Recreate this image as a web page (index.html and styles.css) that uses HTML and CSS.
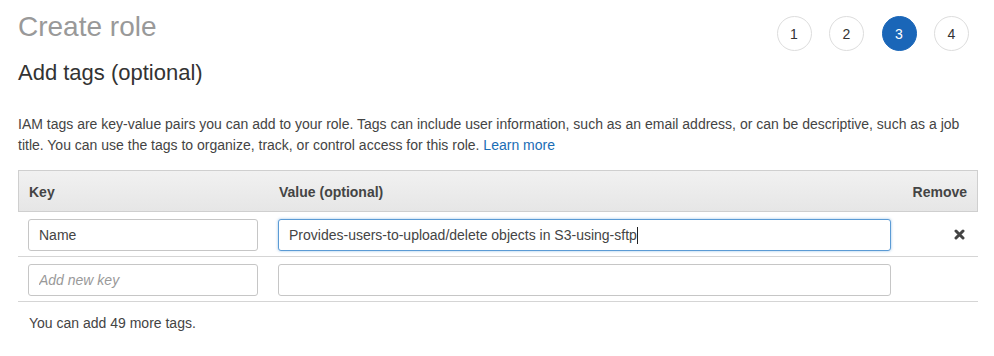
FILE: index.html
```html
<!DOCTYPE html>
<html lang="en">
<head>
<meta charset="utf-8">
<title>Create role</title>
<link rel="stylesheet" href="styles.css">
</head>
<body>
<div class="page">
  <div class="top">
    <div class="titles">
      <h1 class="title">Create role</h1>
      <h2 class="subtitle">Add tags (optional)</h2>
    </div>
    <ol class="steps">
      <li class="step">1</li>
      <li class="step">2</li>
      <li class="step active">3</li>
      <li class="step">4</li>
    </ol>
  </div>
  <p class="intro">IAM tags are key-value pairs you can add to your role. Tags can include user information, such as an email address, or can be descriptive, such as a job title. You can use the tags to organize, track, or control access for this role. <a class="link" href="#">Learn more</a></p>
  <div class="tags">
    <div class="row head">
      <div class="cell">Key</div>
      <div class="cell">Value (optional)</div>
      <div class="cell right">Remove</div>
    </div>
    <div class="row">
      <div class="cell"><input class="field" type="text" value="Name"></div>
      <div class="cell"><div class="field focused">Provides-users-to-upload/delete objects in S3-using-sftp<span class="caret"></span></div></div>
      <div class="cell right">
        <svg class="remove" width="11" height="11" viewBox="0 0 11 11"><path d="M2 2 L9 9 M9 2 L2 9" stroke="#444" stroke-width="3" stroke-linecap="round"/></svg>
      </div>
    </div>
    <div class="row">
      <div class="cell"><input class="field" type="text" placeholder="Add new key"></div>
      <div class="cell"><input class="field" type="text"></div>
      <div class="cell right"></div>
    </div>
  </div>
  <p class="note">You can add 49 more tags.</p>
</div>
</body>
</html>
```
FILE: styles.css
```css
* { box-sizing: border-box; }
html, body { margin: 0; padding: 0; background: #fff; }
body {
  font-family: "Liberation Sans", Arial, sans-serif;
  font-size: 14px;
  color: #444;
}
.page { padding: 10px 16px 0 18px; }
.top { display: flex; justify-content: space-between; align-items: flex-start; }
.title {
  margin: 0;
  font-size: 28px;
  line-height: 34px;
  font-weight: normal;
  color: #999;
}
.subtitle {
  margin: 15px 0 0 0;
  font-size: 22px;
  line-height: 28px;
  font-weight: normal;
  color: #333;
}
.steps {
  list-style: none;
  margin: 6px 9px 0 0;
  padding: 0;
  display: flex;
  gap: 17.5px;
}
.step {
  width: 35px;
  height: 35px;
  border: 1px solid #ddd;
  border-radius: 50%;
  display: flex;
  align-items: center;
  justify-content: center;
  font-size: 14px;
  color: #333;
  background: #fff;
}
.step.active { background: #1a66b8; border-color: #1a66b8; color: #fff; }
.intro {
  margin: 27px 0 0 0;
  line-height: 21px;
  color: #444;
}
.link { color: #1a6db5; text-decoration: none; }
.tags { margin-top: 14px; width: 960px; }
.row {
  display: grid;
  grid-template-columns: 250px 633px 1fr;
  align-items: center;
  height: 45px;
  border-bottom: 1px solid #d5d5d5;
}
.row.head {
  height: 42px;
  border: 1px solid #cfcfcf;
  background: linear-gradient(#f1f1f1, #e6e6e6);
  font-weight: bold;
  color: #444;
}
.cell { padding: 0 10px; }
.row.head .cell { padding-top: 1px; }
.cell.right { display: flex; justify-content: flex-end; padding-right: 10px; }
.field {
  display: block;
  width: 100%;
  height: 32px;
  margin-top: 1px;
  border: 1px solid #c6c6c6;
  border-radius: 3px;
  padding: 0 10px;
  font-family: "Liberation Sans", Arial, sans-serif;
  font-size: 14px;
  color: #444;
  background: #fff;
  outline: none;
  line-height: 30px;
}
.field::placeholder { color: #999; font-style: italic; }
.field.focused {
  border-color: #5b9bd5;
  box-shadow: 0 0 3px rgba(91, 155, 213, 0.6);
  white-space: nowrap;
  overflow: hidden;
}
.caret {
  display: inline-block;
  width: 1px;
  height: 17px;
  background: #222;
  vertical-align: -4px;
}
.remove { display: block; margin-right: 3px; }
.note { margin: 11px 0 0 11px; line-height: 21px; color: #444; }
```
